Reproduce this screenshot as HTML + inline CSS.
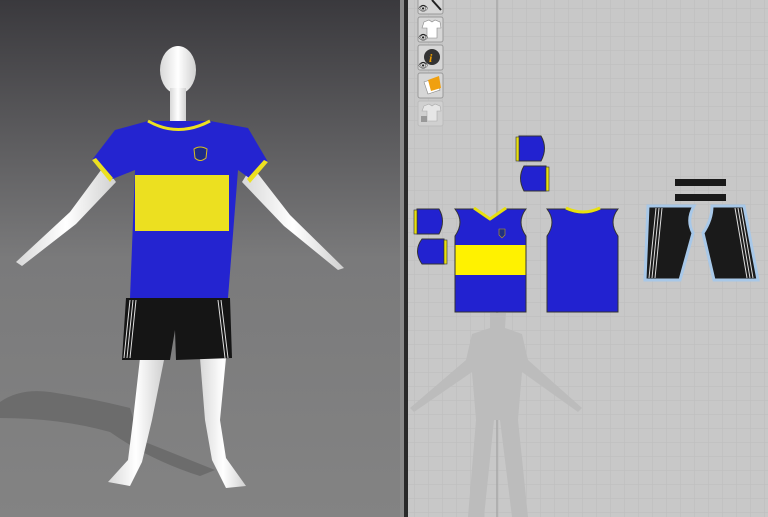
<!DOCTYPE html>
<html><head><meta charset="utf-8"><style>
html,body{margin:0;padding:0;width:768px;height:517px;overflow:hidden;background:#c8c8c8}
svg{display:block}
</style></head><body>
<svg width="768" height="517" viewBox="0 0 768 517" xmlns="http://www.w3.org/2000/svg">
<defs>
<linearGradient id="bg" x1="0" y1="0" x2="0" y2="1">
<stop offset="0" stop-color="#3a393d"/><stop offset="0.5" stop-color="#7a7a7b"/><stop offset="1" stop-color="#838383"/>
</linearGradient>
<linearGradient id="skin" x1="0" y1="0" x2="1" y2="0">
<stop offset="0" stop-color="#d8d8d8"/><stop offset="0.5" stop-color="#ffffff"/><stop offset="1" stop-color="#d0d0d0"/>
</linearGradient>
<pattern id="grid" x="414" y="8" width="14" height="14" patternUnits="userSpaceOnUse">
<path d="M0 0H14M0 0V14" stroke="#bdbdbd" stroke-width="1" fill="none"/>
</pattern>
</defs>
<rect x="0" y="0" width="400" height="517" fill="url(#bg)"/>
<!-- shadow -->
<path d="M0 402 Q20 388 50 392 Q90 398 130 408 L140 440 L215 470 L200 476 Q150 460 110 432 Q60 418 0 418 Z" fill="#6c6c6c"/>
<!-- mannequin -->
<g fill="url(#skin)">
<ellipse cx="178" cy="70" rx="18" ry="24"/>
<rect x="170" y="88" width="16" height="36"/>
<path d="M104 166 L70 212 L16 262 L22 266 L76 224 L116 182 Z"/>
<path d="M252 166 L290 215 L344 268 L338 270 L284 226 L242 182 Z"/>
<path d="M140 358 L133 420 L128 460 L108 482 L130 486 L142 462 L152 420 L164 360 Z"/>
<path d="M200 358 L205 420 L212 460 L226 488 L246 486 L226 458 L220 420 L226 358 Z"/>
</g>
<!-- shirt -->
<path d="M148 121 L210 121 L248 128 L268 162 L252 180 L238 170 L228 298 L130 298 L135 170 L110 180 L92 160 L115 130 Z" fill="#2424d0"/>
<rect x="135" y="175" width="94" height="56" fill="#ece020"/>
<path d="M148 121 Q178 138 210 121" fill="none" stroke="#ece020" stroke-width="3"/>
<path d="M92 160 L110 182 L113 178 L96 158 Z" fill="#ece020"/>
<path d="M268 162 L250 183 L247 179 L264 160 Z" fill="#ece020"/>
<path d="M194 149 Q200 145 207 149 L206 158 Q200 163 195 158 Z" fill="#1c2a8a" stroke="#d8c020" stroke-width="1"/>
<!-- shorts -->
<path d="M126 298 L230 298 L232 358 L176 360 L175 330 L170 360 L122 360 Z" fill="#151515"/>
<path d="M130 300 L124 358 M133 300 L127 358 M136 300 L130 358" stroke="#e0e0e0" stroke-width="1"/>
<path d="M218 300 L225 358 M221 300 L228 358" stroke="#e0e0e0" stroke-width="1"/>
<!-- divider -->
<rect x="400" y="0" width="4" height="517" fill="#8a8a8a"/>
<rect x="404" y="0" width="4" height="517" fill="#2a2a2a"/>
<rect x="408" y="0" width="360" height="517" fill="#c8c8c8"/>
<rect x="408" y="0" width="360" height="517" fill="url(#grid)"/>
<line x1="497" y1="0" x2="497" y2="517" stroke="#a8a8a8" stroke-width="1.5"/>
<!-- avatar silhouette -->
<path d="M490 313 L506 313 L505 328 L522 334 L528 360 L582 408 L578 412 L522 372 L518 420 L528 517 L512 517 L500 420 L494 420 L484 517 L468 517 L476 420 L472 372 L414 412 L410 408 L466 360 L472 334 L490 328 Z" fill="#bcbcbc"/>
<!-- toolbar icons -->
<g stroke="#999" fill="#d6d6d6">
<rect x="418" y="-10" width="25" height="24" rx="2"/>
<rect x="418" y="17" width="25" height="25" rx="2"/>
<rect x="418" y="45" width="25" height="25" rx="2"/>
<rect x="418" y="73" width="25" height="25" rx="2"/>
<rect x="418" y="101" width="25" height="25" rx="2" fill="#d0d0d0" stroke="#bbb"/>
</g>
<path d="M432 0 L441 10" stroke="#222" stroke-width="2"/>
<path d="M424 22 L429 20 L432 22 L435 20 L440 22 L441 28 L437 28 L437 38 L427 38 L427 28 L422 28 Z" fill="#fff" stroke="#888" stroke-width="0.6"/>
<circle cx="432" cy="57" r="8" fill="#333"/>
<text x="429" y="62" font-family="Liberation Serif, serif" font-style="italic" font-weight="bold" font-size="12" fill="#f0a000">i</text>
<path d="M424 82 L436 78 L440 90 L428 94 Z" fill="#fff" stroke="#888" stroke-width="0.6"/>
<path d="M428 80 L439 76 L441 88 L431 91 Z" fill="#f0a010"/>
<path d="M424 106 L429 104 L432 106 L435 104 L440 106 L441 111 L437 111 L437 121 L427 121 L427 111 L422 111 Z" fill="#e6e6e6" stroke="#aaa" stroke-width="0.6"/>
<rect x="421" y="116" width="6" height="6" fill="#999"/>
<g font-size="8" fill="#222"><text x="418" y="11">👁</text><text x="418" y="40">👁</text><text x="418" y="68">👁</text></g>
<!-- sleeves -->
<g stroke="#333" stroke-width="1" fill="#2222d0">
<path d="M519 136 L541 136 Q548 148 541 161 L519 161 Z"/>
<path d="M524 166 L546 166 L546 191 L524 191 Q517 178 524 166 Z"/>
<path d="M417 209 L439 209 Q446 221 439 234 L417 234 Z"/>
<path d="M422 239 L444 239 L444 264 L422 264 Q413 251 422 239 Z"/>
</g>
<g fill="#e8e010" stroke="#333" stroke-width="0.6">
<rect x="516" y="137" width="3" height="24"/><rect x="546" y="167" width="3" height="24"/>
<rect x="414" y="210" width="3" height="24"/><rect x="444" y="240" width="3" height="24"/>
</g>
<!-- front -->
<path d="M455 209 L474 209 L490 220 L506 209 L526 209 Q516 222 526 236 L526 312 L455 312 L455 236 Q465 222 455 209 Z" fill="#2222d0" stroke="#333"/>
<rect x="455.5" y="245" width="70" height="30" fill="#fff200"/>
<path d="M474 208 L490 219 L506 208" stroke="#e8e010" stroke-width="3" fill="none" stroke-linejoin="round"/>
<path d="M499 229 L505 229 L505 235 L502 238 L499 235 Z" fill="#203080" stroke="#c0a020" stroke-width="0.6"/>
<!-- back -->
<path d="M547 209 L565 209 Q583 217 601 209 L618 209 Q608 222 618 236 L618 312 L547 312 L547 236 Q557 222 547 209 Z" fill="#2222d0" stroke="#333"/>
<path d="M566 208 Q583 216 600 208" stroke="#e8e010" stroke-width="3" fill="none"/>
<!-- shorts 2D -->
<rect x="675" y="179" width="51" height="7" fill="#1a1a1a"/>
<rect x="675" y="194" width="51" height="7" fill="#1a1a1a"/>
<path d="M648 206 L694 206 Q686 220 693 233 L680 280 L645 280 Z" fill="#1a1a1a" stroke="#a8c8e8" stroke-width="3"/>
<path d="M712 206 L744 206 L758 280 L714 280 L703 233 Q712 220 712 206 Z" fill="#1a1a1a" stroke="#a8c8e8" stroke-width="3"/>
<path d="M656 208 L649 278 M659 208 L652 278 M662 208 L655 278" stroke="#ddd" stroke-width="1"/>
<path d="M735 208 L747 278 M738 208 L750 278 M741 208 L753 278" stroke="#ddd" stroke-width="1"/>
</svg>
</body></html>
